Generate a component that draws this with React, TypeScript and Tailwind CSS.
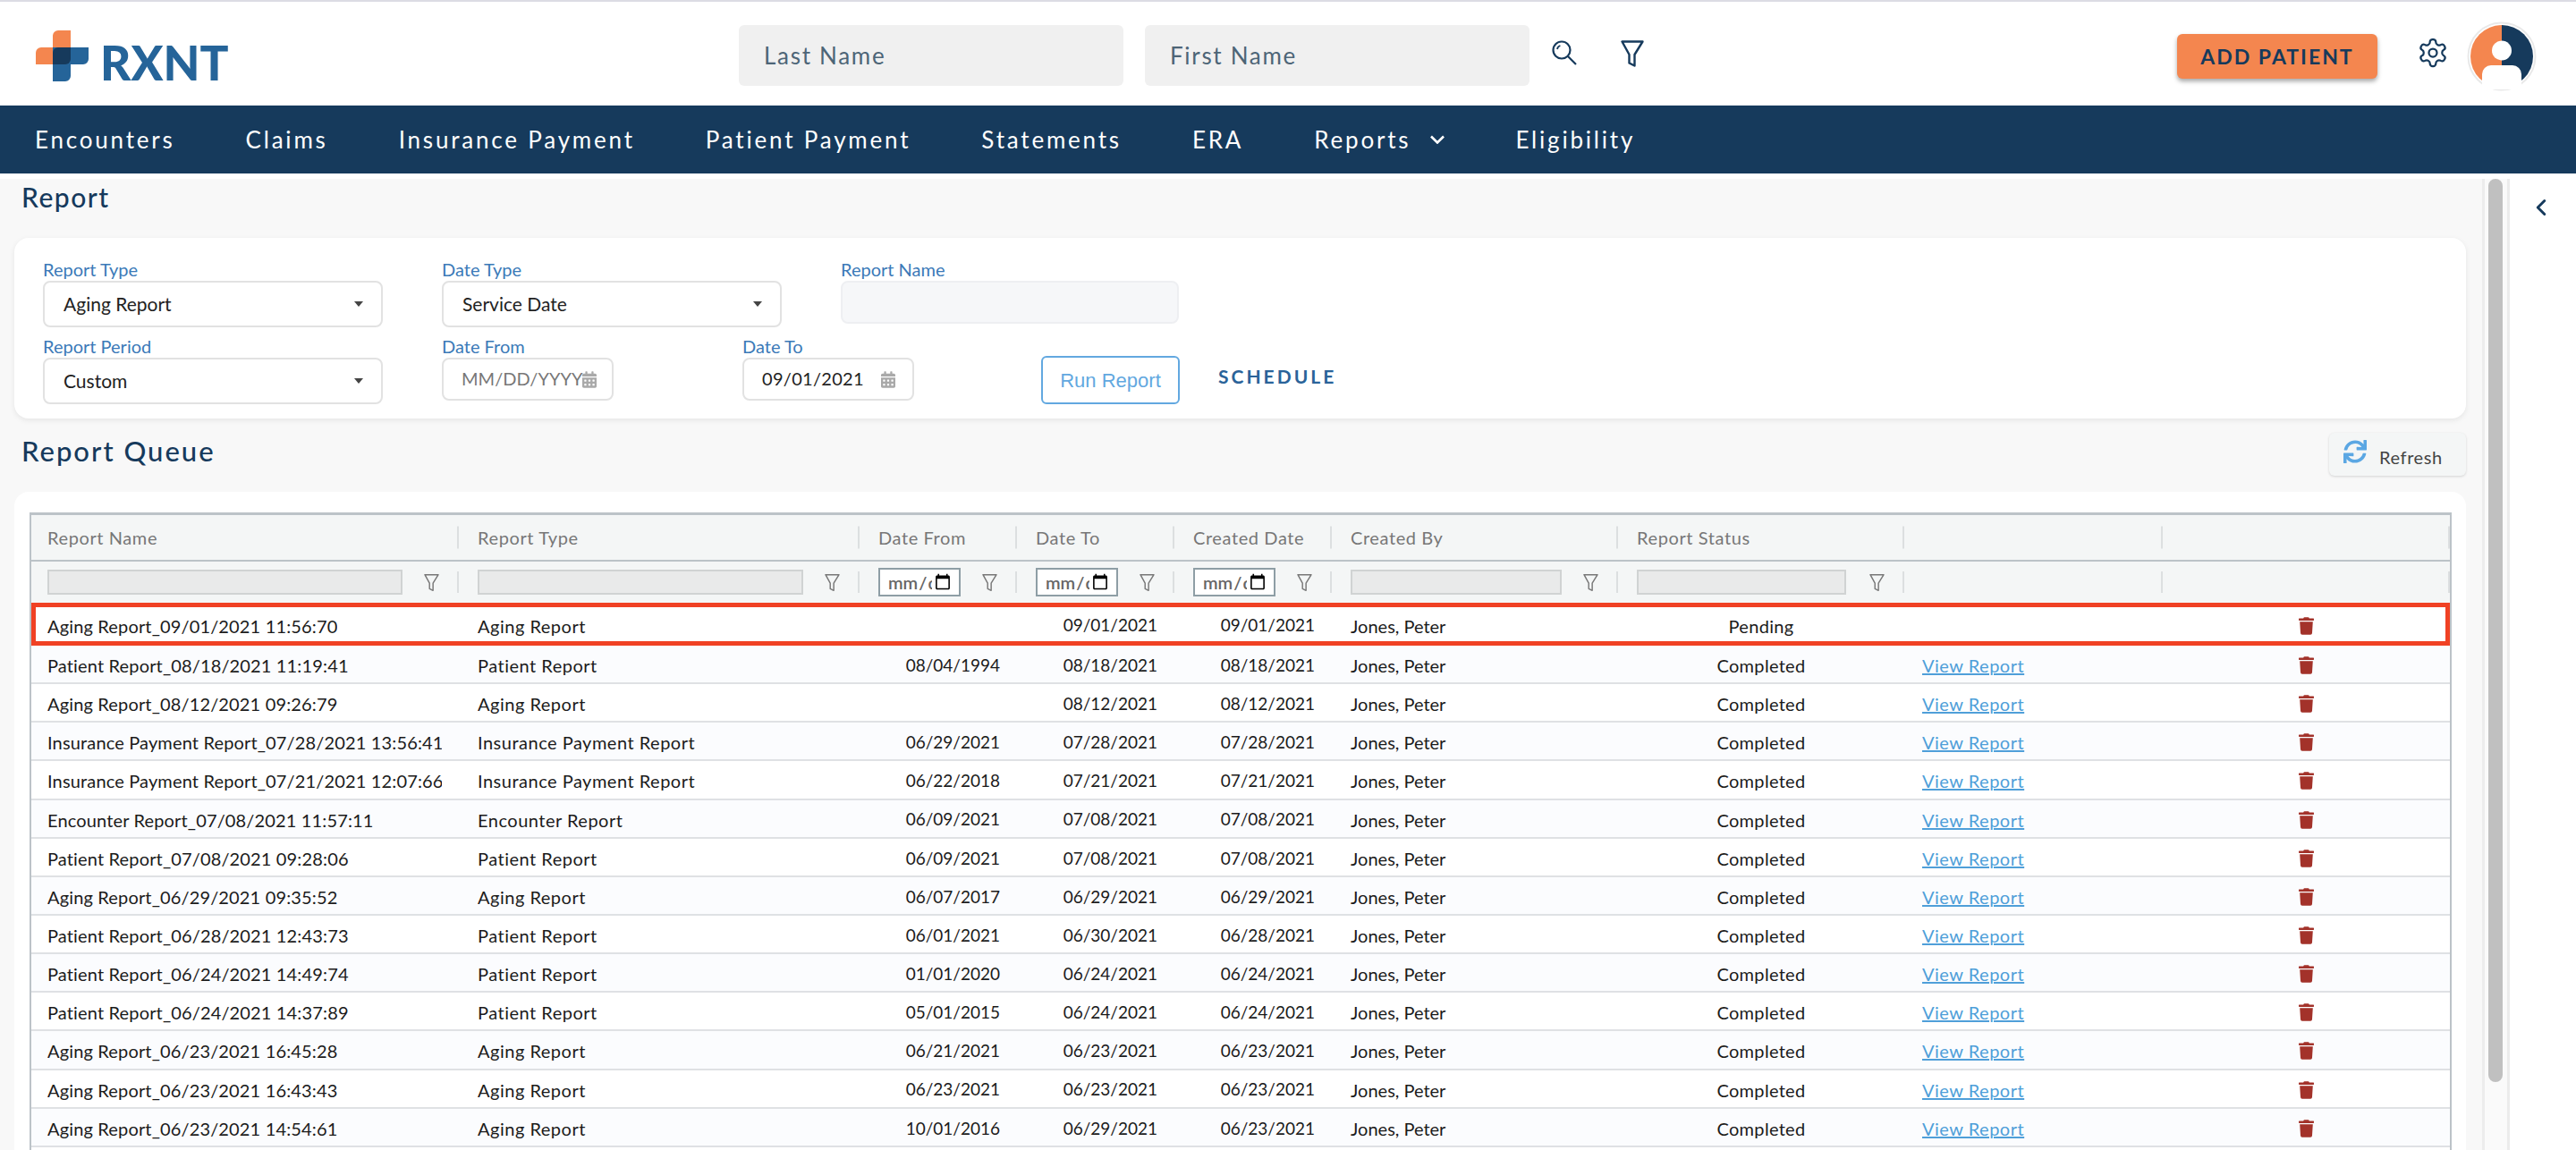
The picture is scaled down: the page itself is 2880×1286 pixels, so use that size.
import React from "react";
import { ChevronLeft } from "lucide-react";
import { FaCalendarAlt, FaTrash, FaSync } from "react-icons/fa";

const font = "font-['Lato','Noto_Sans',sans-serif]";

const navItems = ["Encounters", "Claims", "Insurance Payment", "Patient Payment", "Statements", "ERA", "Reports", "Eligibility"];

const rows = [
  ["Aging Report_09/01/2021 11:56:70", "Aging Report", "", "09/01/2021", "09/01/2021", "Pending"],
  ["Patient Report_08/18/2021 11:19:41", "Patient Report", "08/04/1994", "08/18/2021", "08/18/2021", "Completed"],
  ["Aging Report_08/12/2021 09:26:79", "Aging Report", "", "08/12/2021", "08/12/2021", "Completed"],
  ["Insurance Payment Report_07/28/2021 13:56:41", "Insurance Payment Report", "06/29/2021", "07/28/2021", "07/28/2021", "Completed"],
  ["Insurance Payment Report_07/21/2021 12:07:66", "Insurance Payment Report", "06/22/2018", "07/21/2021", "07/21/2021", "Completed"],
  ["Encounter Report_07/08/2021 11:57:11", "Encounter Report", "06/09/2021", "07/08/2021", "07/08/2021", "Completed"],
  ["Patient Report_07/08/2021 09:28:06", "Patient Report", "06/09/2021", "07/08/2021", "07/08/2021", "Completed"],
  ["Aging Report_06/29/2021 09:35:52", "Aging Report", "06/07/2017", "06/29/2021", "06/29/2021", "Completed"],
  ["Patient Report_06/28/2021 12:43:73", "Patient Report", "06/01/2021", "06/30/2021", "06/28/2021", "Completed"],
  ["Patient Report_06/24/2021 14:49:74", "Patient Report", "01/01/2020", "06/24/2021", "06/24/2021", "Completed"],
  ["Patient Report_06/24/2021 14:37:89", "Patient Report", "05/01/2015", "06/24/2021", "06/24/2021", "Completed"],
  ["Aging Report_06/23/2021 16:45:28", "Aging Report", "06/21/2021", "06/23/2021", "06/23/2021", "Completed"],
  ["Aging Report_06/23/2021 16:43:43", "Aging Report", "06/23/2021", "06/23/2021", "06/23/2021", "Completed"],
  ["Aging Report_06/23/2021 14:54:61", "Aging Report", "10/01/2016", "06/29/2021", "06/23/2021", "Completed"],
];

const gridCols = "grid grid-cols-[478px_448px_176px_176px_176px_320px_320px_289px_321px]";

function FunnelIcon({ className, strokeWidth = 2 }: { className?: string; strokeWidth?: number }) {
  return (
    <svg viewBox="0 0 26 30" className={className} fill="none" stroke="currentColor" strokeWidth={strokeWidth} strokeLinejoin="round">
      <path d="M1.5 1.5h23L15.5 16v12.5l-6-3V16z" />
    </svg>
  );
}

function SearchIcon() {
  return (
    <svg viewBox="0 0 28 28" className="w-[28px] h-[28px] text-[#163a5c]" fill="none" stroke="currentColor" strokeWidth="2.2">
      <circle cx="11" cy="11" r="9.5" />
      <path d="M6 10c.3-2 1.6-3.4 3.4-4" strokeWidth="1.8" />
      <path d="M18 18l9 9" />
    </svg>
  );
}

function GearIcon() {
  return (
    <svg viewBox="0 0 24 24" className="w-[36px] h-[36px] text-[#163a5c]" fill="none" stroke="currentColor" strokeWidth="1.5" strokeLinejoin="round">
      <path d="M12.22 2h-.44a2 2 0 0 0-2 2v.18a2 2 0 0 1-1 1.73l-.43.25a2 2 0 0 1-2 0l-.15-.08a2 2 0 0 0-2.73.73l-.22.38a2 2 0 0 0 .73 2.73l.15.1a2 2 0 0 1 1 1.72v.51a2 2 0 0 1-1 1.74l-.15.09a2 2 0 0 0-.73 2.73l.22.38a2 2 0 0 0 2.73.73l.15-.08a2 2 0 0 1 2 0l.43.25a2 2 0 0 1 1 1.73V20a2 2 0 0 0 2 2h.44a2 2 0 0 0 2-2v-.18a2 2 0 0 1 1-1.73l.43-.25a2 2 0 0 1 2 0l.15.08a2 2 0 0 0 2.73-.73l.22-.39a2 2 0 0 0-.73-2.73l-.15-.08a2 2 0 0 1-1-1.74v-.5a2 2 0 0 1 1-1.74l.15-.09a2 2 0 0 0 .73-2.73l-.22-.38a2 2 0 0 0-2.73-.73l-.15.08a2 2 0 0 1-2 0l-.43-.25a2 2 0 0 1-1-1.73V4a2 2 0 0 0-2-2z" />
      <circle cx="12" cy="12" r="3" />
    </svg>
  );
}

function Avatar() {
  return (
    <svg viewBox="0 0 78 78" className="w-[78px] h-[78px]">
      <circle cx="39" cy="39" r="37.5" fill="#fff" stroke="#e9e9e9" strokeWidth="2" />
      <path d="M39 4a35 35 0 0 0 0 70z" fill="#f4864f" />
      <path d="M39 4a35 35 0 0 1 0 70z" fill="#163a5c" />
      <circle cx="39" cy="32.5" r="11" fill="#fff" />
      <path d="M17 76V59a10 10 0 0 1 10-10h24a10 10 0 0 1 10 10v17z" fill="#fff" />
    </svg>
  );
}

function Logo() {
  return (
    <div className="flex items-start">
      <svg viewBox="0 0 59 57" className="w-[59px] h-[57px] mt-[32px]">
        <path d="M19 6a6 6 0 0 1 6-6h14v38H0V25a6 6 0 0 1 6-6h13z" fill="#f4864f" />
        <path d="M19 19h40v13a6 6 0 0 1-6 6H39v13a6 6 0 0 1-6 6H19z" fill="#256499" />
        <path d="M25 19h14v13a6 6 0 0 1-6 6H19V25a6 6 0 0 1 6-6z" fill="#163a5c" />
      </svg>
      <span className="mt-[34px] ml-[13px] text-[53px] leading-[68px] font-black text-[#256499] font-['Lato',sans-serif]">RXNT</span>
    </div>
  );
}

function SelectBox({ value, label }: { value: string; label: string }) {
  return (
    <div className="w-[380px]">
      <div className="text-[20px] h-[24px] leading-[22px] text-[#3b7ab8]">{label}</div>
      <div className="h-[52px] border-2 border-[#e2e2e2] rounded-[8px] flex items-center justify-between pl-[21px] pr-[20px] text-[21px] text-[#222]">
        <span>{value}</span>
        <span className="w-0 h-0 border-l-[5px] border-r-[5px] border-t-[6px] border-l-transparent border-r-transparent border-t-[#444]" />
      </div>
    </div>
  );
}

function DateBox({ value, label, placeholder }: { value?: string; label: string; placeholder?: string }) {
  return (
    <div className="w-[192px]">
      <div className="text-[20px] h-[24px] leading-[22px] text-[#3b7ab8]">{label}</div>
      <div className="h-[48px] border-2 border-[#e2e2e2] rounded-[8px] flex items-center justify-between pl-[20px] pr-[19px] text-[20px]">
        {value ? <span className="text-[#222] tracking-[0.3px] pb-[2px]">{value}</span> : <span className="text-[#777] whitespace-nowrap pb-[2px]">{placeholder}</span>}
        <FaCalendarAlt className="w-[16px] h-[19px] text-[#a9a9a9] shrink-0" />
      </div>
    </div>
  );
}

function FilterText({ width }: { width: string }) {
  return <div className={`${width} h-[28px] bg-[#e9eaea] border-2 border-[#d0d3d3]`} />;
}

function DateFilter() {
  return (
    <input
      type="date"
      className="w-[92px] h-[32px] border-2 border-[#8e9ea5] bg-white pl-[8px] pr-[6px] text-[20px] font-semibold text-[#666] outline-none"
    />
  );
}

function Sep({ h }: { h: string }) {
  return <div className={`absolute right-0 top-1/2 -translate-y-1/2 w-[2px] ${h} bg-[#dcdfe0]`} />;
}

function HeadCell({ label, pad = "pl-[21px]" }: { label?: string; pad?: string }) {
  return (
    <div className={`relative flex items-center ${pad} text-[20px] tracking-[0.6px] text-[#777]`}>
      {label}
      <Sep h="h-[25px]" />
    </div>
  );
}

function FilterCell({ children, icon = true, pad = "pl-[21px]" }: { children?: React.ReactNode; icon?: boolean; pad?: string }) {
  return (
    <div className={`relative flex items-center justify-between ${pad} pr-[22px]`}>
      {children}
      {icon && <FunnelIcon className="w-[17px] h-[21px] text-[#777]" strokeWidth={2.2} />}
      <Sep h="h-[24px]" />
    </div>
  );
}

function TableRow({ row, index }: { row: string[]; index: number }) {
  const first = index === 0;
  const alt = index % 2 === 1 ? "bg-[#fbfcfe]" : "bg-white";
  return (
    <div
      className={`${gridCols} ${alt} text-[20px] text-[#1b1b1b] ${
        first ? "h-[48px] pt-[3px] outline-[5px] outline-[#f04124] -outline-offset-[5px] relative" : "h-[43.15px] pt-[3px] border-b-2 border-[#dfe1e4]"
      }`}
    >
      <div className="flex items-center pl-[18px] pr-[19px] overflow-hidden whitespace-nowrap tracking-[0.15px]">
        <span className="overflow-hidden">{row[0]}</span>
      </div>
      <div className="flex items-center pl-[21px] tracking-[0.5px]">{row[1]}</div>
      <div className="flex items-center justify-end pr-[19px] text-[19px]">{row[2]}</div>
      <div className="flex items-center justify-end pr-[19px] text-[19px]">{row[3]}</div>
      <div className="flex items-center justify-end pr-[19px] text-[19px]">{row[4]}</div>
      <div className="flex items-center pl-[21px]">Jones, Peter</div>
      <div className="flex items-center justify-center tracking-[0.3px]">{row[5]}</div>
      <div className="flex items-center pl-[20px]">
        {!first && <a className="text-[#4f9fd9] underline tracking-[0.5px]">View Report</a>}
      </div>
      <div className="flex items-center justify-center">
        <FaTrash className="w-[17px] h-[20px] text-[#a3322a]" />
      </div>
    </div>
  );
}

export default function App() {
  return (
    <div className={`${font} w-[2880px] h-[1286px] overflow-hidden bg-white flex flex-col`}>
      <div className="h-[2px] bg-[#dcdce4]" />
      <header className="h-[116px] flex bg-white relative">
        <div className="w-[826px] pl-[40px]">
          <Logo />
        </div>
        <div className="flex items-start pt-[26px] gap-[24px]">
          <div className="w-[430px] h-[68px] bg-[#f0f0f0] rounded-[6px] flex items-center pl-[28px] text-[26px] tracking-[1.7px] text-[#4d6577]">Last Name</div>
          <div className="w-[430px] h-[68px] bg-[#f0f0f0] rounded-[6px] flex items-center pl-[28px] text-[26px] tracking-[1.7px] text-[#4d6577]">First Name</div>
        </div>
        <div className="flex items-start pt-[43px] pl-[25px] gap-[49px]">
          <SearchIcon />
          <FunnelIcon className="w-[26px] h-[30px] text-[#163a5c]" strokeWidth={2.4} />
        </div>
        <div className="ml-auto flex items-start pr-[44px]">
          <button className="mt-[36px] w-[224px] h-[50px] bg-[#f4864f] rounded-[6px] shadow-[0_3px_5px_rgba(0,0,0,0.35)] text-[23px] font-bold tracking-[2px] text-[#163a5c]">ADD PATIENT</button>
          <div className="mt-[39px] ml-[44px]"><GearIcon /></div>
          <div className="mt-[22px] ml-[20px]"><Avatar /></div>
        </div>
      </header>
      <nav className="h-[76px] bg-[#163a5c] flex items-center pl-[39px] gap-[79px] text-[26px] tracking-[2.8px] text-white">
        {navItems.map((item) =>
          item === "Reports" ? (
            <span key={item} className="flex items-center gap-[22px]">
              {item}
              <svg viewBox="0 0 16 10" className="w-[16px] h-[10px]" fill="none" stroke="currentColor" strokeWidth="2.6">
                <path d="M1 1.5l7 7 7-7" />
              </svg>
            </span>
          ) : (
            <span key={item}>{item}</span>
          ),
        )}
      </nav>
      <div className="h-[6px] bg-white" />
      <div className="flex-1 flex min-h-0">
        <main className="w-[2775px] bg-[#f8f8f8] pl-[16px] pr-[18px] overflow-hidden">
          <h1 className="text-[30px] leading-[40px] pl-[8px] text-[#163a5c] font-medium tracking-[1.5px]">Report</h1>
          <section className="mt-[26px] h-[202px] bg-white rounded-[16px] shadow-[0_2px_6px_rgba(0,0,0,0.08)] pl-[32px] pt-[24px]">
            <div className="flex gap-[66px] h-[100px]">
              <SelectBox label="Report Type" value="Aging Report" />
              <SelectBox label="Date Type" value="Service Date" />
              <div className="w-[378px]">
                <div className="text-[20px] h-[24px] leading-[22px] text-[#3b7ab8]">Report Name</div>
                <div className="h-[48px] bg-[#f6f7f9] border-2 border-[#eeeff2] rounded-[8px]" />
              </div>
            </div>
            <div className="flex h-[76px] -mt-[14px]">
              <SelectBox label="Report Period" value="Custom" />
              <div className="ml-[66px]"><DateBox label="Date From" placeholder="MM/DD/YYYY" /></div>
              <div className="ml-[144px]"><DateBox label="Date To" value="09/01/2021" /></div>
              <button className="ml-[142px] mt-[22px] w-[155px] h-[54px] border-2 border-[#62a8e0] rounded-[6px] text-[22px] text-[#62a8e0] font-['Liberation_Sans',sans-serif]">Run Report</button>
              <button className="ml-[43px] mt-[29px] h-[28px] text-[21px] font-bold tracking-[3px] text-[#2a6399]">SCHEDULE</button>
            </div>
          </section>
          <div className="flex justify-between items-start h-[82px] pt-[16px]">
            <h2 className="pl-[8px] -mt-[2px] text-[31px] leading-[44px] font-medium tracking-[2px] text-[#163a5c]">Report Queue</h2>
            <button className="w-[153px] h-[48px] bg-[#f4f6f6] rounded-[6px] shadow-[0_1px_3px_rgba(0,0,0,0.15)] flex items-start pl-[16px] pt-[8px] gap-[14px] text-[20px] leading-[24px] text-[#444] tracking-[0.6px]">
              <FaSync className="w-[26px] h-[26px] text-[#5ba7e3]" />
              <span className="pt-[7px]">Refresh</span>
            </button>
          </div>
          <section className="bg-white rounded-t-[16px] pl-[17px] pr-[16px] pt-[23px] h-[740px]">
            <div className="border-x-2 border-t-[3px] border-[#bcc3c8]">
              <div className={`${gridCols} h-[52px] bg-[#f4f6f6] border-b-2 border-[#bcc3c8]`}>
                <HeadCell label="Report Name" pad="pl-[18px]" />
                <HeadCell label="Report Type" />
                <HeadCell label="Date From" />
                <HeadCell label="Date To" />
                <HeadCell label="Created Date" />
                <HeadCell label="Created By" />
                <HeadCell label="Report Status" />
                <HeadCell />
                <HeadCell />
              </div>
              <div className={`${gridCols} h-[46px] bg-[#f4f6f6]`}>
                <FilterCell pad="pl-[18px]"><FilterText width="w-[397px]" /></FilterCell>
                <FilterCell><FilterText width="w-[364px]" /></FilterCell>
                <FilterCell><DateFilter /></FilterCell>
                <FilterCell><DateFilter /></FilterCell>
                <FilterCell><DateFilter /></FilterCell>
                <FilterCell><FilterText width="w-[236px]" /></FilterCell>
                <FilterCell><FilterText width="w-[234px]" /></FilterCell>
                <FilterCell icon={false} />
                <FilterCell icon={false} />
              </div>
              {rows.map((row, i) => (
                <TableRow key={row[0]} row={row} index={i} />
              ))}
              <div className="h-[43px] bg-white" />
            </div>
          </section>
        </main>
        <div className="w-[31px] bg-[#fafafa] border-x-[3px] border-[#ececec] pl-[4px]">
          <div className="w-[16px] h-[1010px] bg-[#c0c0c0] rounded-[8px]" />
        </div>
        <aside className="flex-1 bg-white pl-[20px] pt-[17px]">
          <ChevronLeft className="w-[30px] h-[30px] text-[#163a5c]" strokeWidth={2.4} />
        </aside>
      </div>
    </div>
  );
}
